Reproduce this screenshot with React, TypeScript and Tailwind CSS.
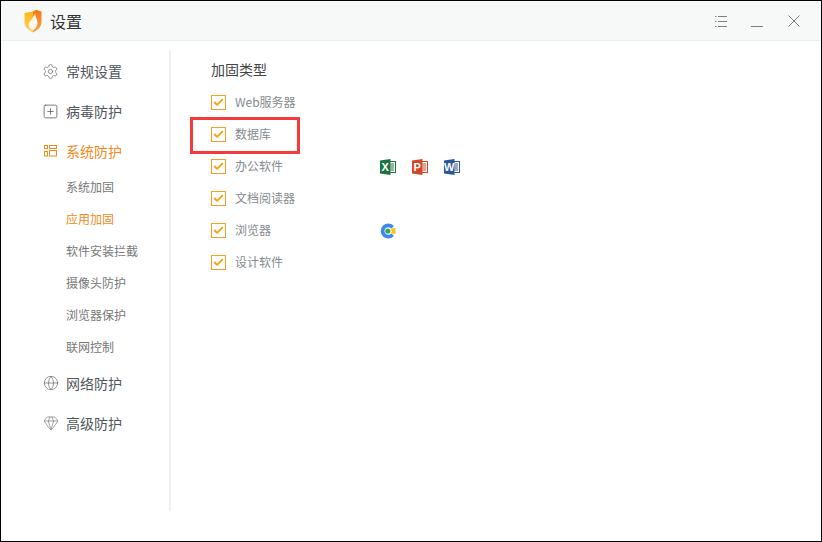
import React from 'react';
import { Settings, SquarePlus, Globe, Gem, Check } from 'lucide-react';

const font = "font-['Noto_Sans_CJK_SC','Noto_Sans',sans-serif]";

const ShieldLogo = () => (
  <svg width="20" height="24" viewBox="0 0 20 24" aria-hidden="true">
    <defs>
      <linearGradient id="shieldLeft" x1="0" y1="0" x2="0" y2="1">
        <stop offset="0" stopColor="#fdb813" />
        <stop offset="1" stopColor="#fbd26a" />
      </linearGradient>
      <linearGradient id="shieldRight" x1="0" y1="0" x2="0" y2="1">
        <stop offset="0" stopColor="#f47a0c" />
        <stop offset="1" stopColor="#f9a24a" />
      </linearGradient>
    </defs>
    <path d="M10 2.5 L1.5 4 L1.5 13 C1.5 18 6 21.5 10 23.5 Z" fill="url(#shieldLeft)" />
    <path d="M10 2.5 L13 0.8 L18.5 2.5 L18.5 13 C18.5 18 14 21.5 10 23.5 Z" fill="url(#shieldRight)" />
    <path d="M12.5 4 C11.5 8 15.2 10.5 14.4 15 C13.9 18 12 20 10 21.5 C7.3 20.2 5.4 17.8 5.8 15 C6.2 12.5 8.5 11 9.7 8.8 C10.5 7.4 11.7 5.6 12.5 4 Z" fill="#fff6ec" />
  </svg>
);

const OfficeIcon = ({ letter, color }: { letter: string; color: string }) => (
  <svg width="16" height="16" viewBox="0 0 16 16" aria-hidden="true">
    <rect x="9" y="2.5" width="6.5" height="11" fill="#fff" stroke={color} />
    <path d="M10.5 5h3.5M10.5 7h3.5M10.5 9h3.5M10.5 11h3.5" stroke={color} strokeWidth="1" />
    <path d="M0 1.5 L10.5 0 V16 L0 14.5 Z" fill={color} />
    <text x="5.2" y="12" fontSize="11" fontWeight="700" fill="#fff" textAnchor="middle" fontFamily="Liberation Sans, sans-serif">
      {letter}
    </text>
  </svg>
);

const BrowserIcon = () => (
  <svg width="16" height="16" viewBox="0 0 16 16" aria-hidden="true">
    <path d="M14 3.2 A7.5 7.5 0 1 0 14 12.8 L11.2 10.4 A3.8 3.8 0 1 1 11.2 5.6 Z" fill="#3f86ee" />
    <circle cx="7.8" cy="8" r="2.6" fill="#35a853" />
    <path d="M10.5 5.5 L15.5 5 V11 L10.5 10.5 A3.4 3.4 0 0 0 10.5 5.5 Z" fill="#fbc116" />
  </svg>
);

const GridIcon = () => (
  <svg width="13" height="12" viewBox="0 0 13 12" fill="none" stroke="#f08a1d" strokeWidth="1" aria-hidden="true">
    <rect x="0.5" y="0.5" width="3" height="3" />
    <rect x="0.5" y="6.5" width="3" height="4.5" />
    <rect x="5.5" y="0.5" width="7" height="3" />
    <rect x="5.5" y="5.5" width="7" height="5.5" />
  </svg>
);

const MainItem = ({ icon, label, active }: { icon: React.ReactNode; label: string; active?: boolean }) => (
  <div className={`flex h-10 items-center gap-[7px] pl-[42px] text-[14px] ${active ? 'text-[#f08a1d]' : 'text-[#50555b]'}`}>
    <span className="flex w-[17px] justify-center">{icon}</span>
    <span>{label}</span>
  </div>
);

const subItems = ['系统加固', '应用加固', '软件安装拦截', '摄像头防护', '浏览器保护', '联网控制'];

const rows: { label: string; icons?: React.ReactNode }[] = [
  { label: 'Web服务器' },
  { label: '数据库' },
  {
    label: '办公软件',
    icons: (
      <>
        <OfficeIcon letter="X" color="#1f7244" />
        <OfficeIcon letter="P" color="#d2472a" />
        <OfficeIcon letter="W" color="#2b579a" />
      </>
    ),
  },
  { label: '文档阅读器' },
  { label: '浏览器', icons: <BrowserIcon /> },
  { label: '设计软件' },
];

export default function App() {
  return (
    <div className={`${font} flex h-[542px] w-[822px] flex-col overflow-hidden border border-black bg-white`}>
      <header className="flex h-[40px] shrink-0 items-center border-b border-[#eeeeee] bg-[#f7f9f9] pl-[22px] pr-[21px]">
        <ShieldLogo />
        <span className="ml-[7px] text-[16px] text-[#333]">设置</span>
        <div className="ml-auto flex items-center gap-[24px] text-[#808080]">
          <svg width="12" height="12" viewBox="0 0 12 12" stroke="currentColor" fill="none" aria-hidden="true">
            <path d="M3 1.5h9M3 6.5h9M3 11.5h9" />
            <path d="M0 1.5h1.5M0 6.5h1.5M0 11.5h1.5" />
          </svg>
          <svg width="12" height="12" viewBox="0 0 12 12" stroke="currentColor" fill="none" aria-hidden="true">
            <path d="M0 11.5h12" />
          </svg>
          <svg className="ml-px" width="12" height="12" viewBox="0 0 12 12" stroke="currentColor" fill="none" aria-hidden="true">
            <path d="M0.5 0.5l11 11M11.5 0.5l-11 11" />
          </svg>
        </div>
      </header>

      <div className="flex min-h-0 flex-1">
        <nav className="mb-[30px] mt-[10px] w-[170px] shrink-0 border-r-2 border-[#f0f0f0]">
          <div className="-ml-px">
            <MainItem icon={<Settings size={17} strokeWidth={1} color="#666" />} label="常规设置" />
            <MainItem icon={<SquarePlus size={17} strokeWidth={1.2} color="#666" />} label="病毒防护" />
            <MainItem icon={<GridIcon />} label="系统防护" active />
            <ul>
              {subItems.map((item) => (
                <li
                  key={item}
                  className={`flex h-8 items-center pl-[66px] text-[12px] ${item === '应用加固' ? 'text-[#f08a1d]' : 'text-[#777]'}`}
                >
                  {item}
                </li>
              ))}
            </ul>
            <MainItem icon={<Globe size={16} strokeWidth={1} color="#666" />} label="网络防护" />
            <MainItem icon={<Gem size={16} strokeWidth={1} color="#777" />} label="高级防护" />
          </div>
        </nav>

        <main className="relative flex-1 pl-[40px] pt-[18px]">
          <h2 className="mb-[7px] flex h-5 items-center text-[14px] font-normal text-[#444]">加固类型</h2>
          <div>
            {rows.map((row) => (
              <div key={row.label} className="flex h-8 items-center">
                <span className="flex h-[15px] w-[15px] items-center justify-center border border-[#f7a11d]">
                  <Check size={11} strokeWidth={4} color="#f7a11d" />
                </span>
                <span className="ml-[9px] w-[145px] text-[12px] text-[#858a90]">{row.label}</span>
                {row.icons && <span className="flex translate-y-px gap-[16px]">{row.icons}</span>}
              </div>
            ))}
          </div>
          <div className="absolute left-[19px] top-[76px] h-[37px] w-[110px] border-[3px] border-[#f43a3a]" />
        </main>
      </div>
    </div>
  );
}
